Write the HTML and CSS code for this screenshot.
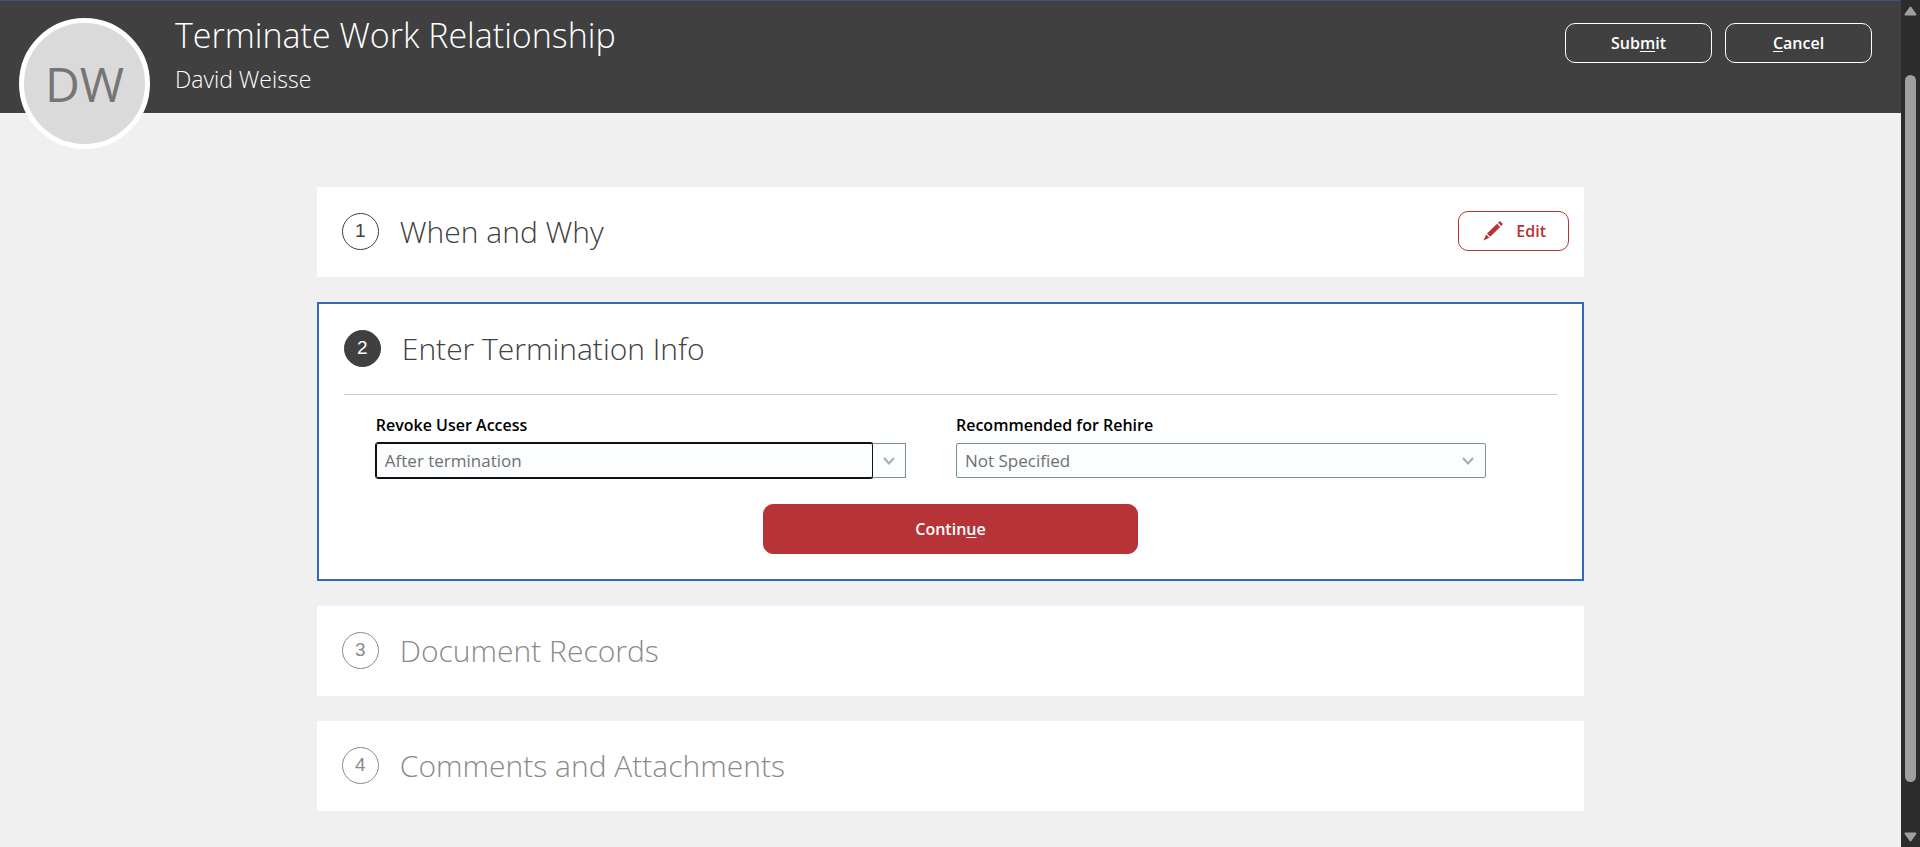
FILE: index.html
```html
<!DOCTYPE html>
<html lang="en">
<head>
<meta charset="utf-8">
<title>Terminate Work Relationship</title>
<link rel="stylesheet" href="styles.css">
</head>
<body>
<div class="shell">
  <div class="page">
    <header class="header">
      <div class="avatar" aria-hidden="true">DW</div>
      <div class="titles">
        <h1 class="title">Terminate Work Relationship</h1>
        <p class="person">David Weisse</p>
      </div>
      <div class="actions">
        <button class="btn btn-ghost" type="button" accesskey="m"><span>Sub<u>m</u>it</span></button>
        <button class="btn btn-ghost" type="button" accesskey="c"><span><u>C</u>ancel</span></button>
      </div>
    </header>

    <main class="steps">
      <section class="card">
        <div class="card-head">
          <span class="step">1</span>
          <h2 class="card-title">When and Why</h2>
          <button class="btn btn-edit" type="button">
            <svg class="pencil" viewBox="0 0 20 20" aria-hidden="true">
              <path d="M15 1.800 16.200.6q.6-.5 1.200 0l2 2q.6.6 0 1.200L18.200 5z"/>
              <path d="M14 2.800l3.200 3.200L7.200 15.800 4 12.600z"/>
              <path d="M3.200 13.500l3.200 3.200L.5 19.600z"/>
            </svg>
            <span>Edit</span>
          </button>
        </div>
      </section>

      <section class="card card-active">
        <div class="card-head">
          <span class="step step-active">2</span>
          <h2 class="card-title">Enter Termination Info</h2>
        </div>
        <form class="form">
          <div class="fields">
            <div class="field">
              <label class="label" for="revoke">Revoke User Access</label>
              <div class="combo">
                <input class="combo-input" id="revoke" type="text" value="After termination">
                <button class="combo-toggle" type="button" aria-label="Show options">
                  <svg class="chevron" viewBox="0 0 14 8" aria-hidden="true"><path d="M2 1 7 6.500 12 1"/></svg>
                </button>
              </div>
            </div>
            <div class="field">
              <label class="label" for="rehire">Recommended for Rehire</label>
              <div class="select-wrap">
                <select class="select" id="rehire">
                  <option>Not Specified</option>
                </select>
                <svg class="chevron select-chevron" viewBox="0 0 14 8" aria-hidden="true"><path d="M2 1 7 6.500 12 1"/></svg>
              </div>
            </div>
          </div>
          <button class="btn btn-primary" type="button" accesskey="u"><span>Contin<u>u</u>e</span></button>
        </form>
      </section>

      <section class="card card-pending">
        <div class="card-head">
          <span class="step">3</span>
          <h2 class="card-title">Document Records</h2>
        </div>
      </section>

      <section class="card card-pending">
        <div class="card-head">
          <span class="step">4</span>
          <h2 class="card-title">Comments and Attachments</h2>
        </div>
      </section>
    </main>
  </div>

  <div class="rail" aria-hidden="true">
    <svg class="arrow" viewBox="0 0 13 10"><path d="M6.500 1.500 11.500 8.500H1.500z"/></svg>
    <div class="track"><div class="thumb"></div></div>
    <svg class="arrow" viewBox="0 0 13 10"><path d="M6.500 8.500 11.500 1.500H1.500z"/></svg>
  </div>
</div>
</body>
</html>
```

FILE: styles.css
```css
* {
  box-sizing: border-box;
}

body {
  margin: 0;
  background: #f0f0f0;
  color: #404040;
  font-family: "Open Sans", "Noto Sans", sans-serif;
}

h1,
h2,
p {
  margin: 0;
  font-weight: 300;
}

button,
input,
select {
  font-family: inherit;
}

.shell {
  display: flex;
  min-height: 100vh;
}

.page {
  flex: 1;
  min-width: 0;
}

/* Header */
.header {
  display: flex;
  align-items: flex-start;
  height: 113px;
  padding: 0 29px 0 19px;
  border-top: 1px solid #3d5378;
  background: #404040;
  color: #fff;
}

.avatar {
  display: flex;
  flex: none;
  align-items: center;
  justify-content: center;
  width: 131px;
  height: 131px;
  margin-top: 17px;
  border: 5px solid #fff;
  border-radius: 50%;
  background: #dadada;
  color: #757575;
  font-size: 48px;
  font-weight: 400;
}

.titles {
  flex: 1;
  margin-left: 25px;
  padding-top: 10px;
}

.title {
  font-size: 34px;
  line-height: 48px;
}

.person {
  font-size: 23px;
  line-height: 40px;
}

.actions {
  display: flex;
  gap: 13px;
  padding-top: 22px;
}

/* Buttons */
.btn {
  display: flex;
  align-items: center;
  justify-content: center;
  height: 40px;
  padding: 0;
  border: 1px solid;
  border-radius: 10px;
  background: none;
  font-size: 16px;
  font-weight: 600;
}

.btn u {
  text-underline-offset: 2px;
}

.btn-ghost {
  width: 147px;
  border-color: #fff;
  color: #fff;
}

.btn-edit {
  gap: 13px;
  width: 111px;
  margin-left: auto;
  padding-left: 2px;
  border-color: #b63438;
  color: #b63438;
}

.btn-primary {
  width: 375px;
  height: 50px;
  margin: 0 auto;
  border-color: #b63438;
  background: #b63438;
  color: #fff;
}

.pencil {
  width: 20px;
  height: 20px;
  fill: #b63438;
}

/* Step cards */
.steps {
  display: grid;
  gap: 25px;
  width: calc(100% * 2 / 3);
  margin: 0 auto;
  padding: 74px 0 36px;
}

.card {
  background: #fff;
}

.card-head {
  display: flex;
  align-items: center;
  height: 90px;
  padding: 0 15px 2px 25px;
}

.step {
  display: flex;
  flex: none;
  align-items: center;
  justify-content: center;
  width: 37px;
  height: 37px;
  border: 1px solid #404040;
  border-radius: 50%;
  font-family: "Liberation Sans", sans-serif;
  font-size: 19px;
}

.step-active {
  background: #404040;
  color: #fff;
}

.card-title {
  margin-left: 21px;
  padding-top: 2px;
  font-size: 30px;
  line-height: 44px;
}

.card-active {
  padding-bottom: 25px;
  border: 2px solid #3569b5;
}

.card-pending {
  color: #8a8a8a;
}

.card-pending .step {
  border-color: #8a8a8a;
}

/* Form */
.form {
  margin: 0 25px;
  border-top: 1px solid #ccc;
}

.fields {
  display: grid;
  grid-template-columns: 1fr 1fr;
  gap: 50px;
  padding: 18px 71px 26px 32px;
}

.label {
  display: block;
  margin-bottom: 6px;
  color: #000;
  font-size: 16px;
  font-weight: 600;
  line-height: 24px;
}

.combo {
  display: flex;
  height: 35px;
}

.combo-input {
  flex: 1;
  min-width: 0;
  padding: 0 8px;
  border: 1px solid #111;
  border-radius: 2px;
  outline: 1px solid #111;
  background: #fbfdff;
  color: #707070;
  font-size: 17px;
  font-weight: 500;
}

.combo-toggle {
  display: flex;
  align-items: center;
  justify-content: center;
  width: 33px;
  padding: 0;
  border: 1px solid #7b8f99;
  border-left: 0;
  background: #fbfdff;
}

.chevron {
  width: 14px;
  height: 8px;
  fill: none;
  stroke: #a8acaf;
  stroke-width: 2;
}

.select-wrap {
  position: relative;
}

.select {
  display: block;
  width: 100%;
  height: 35px;
  padding: 0 8px;
  border: 1px solid #7b8f99;
  border-radius: 2px;
  appearance: none;
  background: #fbfdff;
  color: #707070;
  font-size: 17px;
  font-weight: 500;
}

.select-chevron {
  position: absolute;
  top: 14px;
  right: 11px;
  pointer-events: none;
}

/* Scroll rail */
.rail {
  display: flex;
  position: sticky;
  top: 0;
  flex-direction: column;
  align-items: center;
  width: 19px;
  height: 100vh;
  padding: 6px 0 5px;
  background: #2c2c2c;
}

.arrow {
  width: 13px;
  height: 10px;
  fill: #9f9f9f;
  stroke: #9f9f9f;
  stroke-width: 2;
  stroke-linejoin: round;
}

.track {
  flex: 1;
  width: 11px;
  padding: 59px 0 50px;
}

.thumb {
  height: 100%;
  border-radius: 6px;
  background: #9f9f9f;
}
```
